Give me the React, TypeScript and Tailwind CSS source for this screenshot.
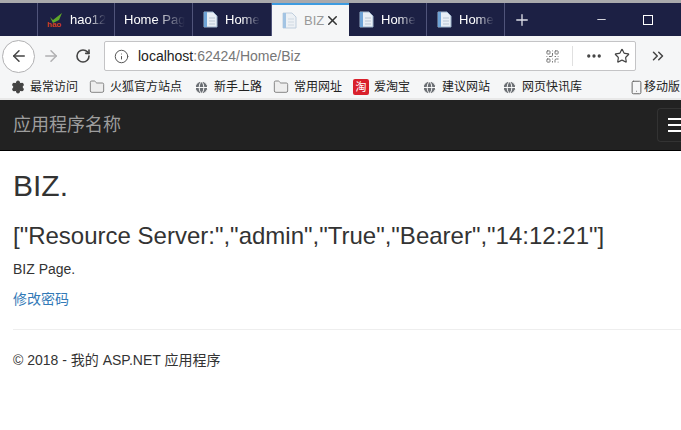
import { ArrowLeft, ArrowRight, RotateCw, Info, Ellipsis, Star, ChevronsRight, X, Plus, Minus, Settings, Folder, Globe, QrCode, Smartphone } from "lucide-react";

const cjk = "font-['Liberation_Sans','Noto_Sans_CJK_SC',sans-serif]";

function DocIcon({ dim }: { dim?: boolean }) {
  return (
    <svg width="17" height="17" viewBox="0 0 17 17" className={`shrink-0 ${dim ? "opacity-60" : ""}`}>
      <path d="M2 1h9l4 4v11H2z" fill="#e8eef5" stroke="#9db4cc" />
      <path d="M2 1h3v15H2z" fill="#6ea3d6" />
      <path d="M7 7h6M7 10h6M7 13h6" stroke="#b9c6d4" />
    </svg>
  );
}

function Tab({ label, icon, width }: { label: string; icon?: React.ReactNode; width: string }) {
  return (
    <div className={`flex h-full ${width} shrink-0 items-center gap-[6px] border-r border-[#50547a] pl-[9px] text-[13px] text-white`}>
      {icon}
      <span className="whitespace-nowrap [mask-image:linear-gradient(90deg,#000_50%,transparent)]">{label}</span>
    </div>
  );
}

function Bookmark({ icon, label, width }: { icon: React.ReactNode; label: string; width: string }) {
  return (
    <div className={`flex ${width} shrink-0 items-center gap-[5px] whitespace-nowrap`}>
      {icon}
      <span>{label}</span>
    </div>
  );
}

const folder = <Folder size={16} className="shrink-0 text-[#777] fill-[#eee]" strokeWidth={1.3} />;
const globe = <Globe size={15} className="shrink-0 text-white fill-[#6b6f74]" strokeWidth={1.5} />;

export default function App() {
  return (
    <div className={`h-[430px] w-[681px] overflow-hidden bg-white ${cjk}`}>
      <div className="h-[3px] bg-[#a9a9ac]" />
      {/* tab strip */}
      <div className="flex h-[33px] items-center bg-[#1c2044]">
        <div className="h-full w-[38px] shrink-0 border-r border-[#50547a]" />
        <Tab
          width="w-[77px]"
          label="hao12"
          icon={
            <svg width="17" height="17" viewBox="0 0 17 17" className="shrink-0">
              <path d="M3 6l3 3 9-7-3 7-6 3z" fill="#5fa829" />
              <text x="0" y="16" fontSize="8" fontWeight="700" fill="#d2401f">hao</text>
            </svg>
          }
        />
        <Tab width="w-[78px]" label="Home Pag" />
        <Tab width="w-[79px]" label="Home" icon={<DocIcon />} />
        <div className="flex h-full w-[77px] shrink-0 items-center gap-[6px] border-t-2 border-[#3d9be0] bg-[#f5f6f7] pl-[9px] text-[13px] text-[#999]">
          <DocIcon dim />
          <span>BIZ</span>
          <X size={15} className="ml-[-5px] shrink-0 text-[#333]" strokeWidth={2.4} />
        </div>
        <Tab width="w-[78px]" label="Home" icon={<DocIcon />} />
        <Tab width="w-[78px]" label="Home" icon={<DocIcon />} />
        <Plus size={18} className="ml-[8px] text-[#dcdde6]" strokeWidth={1.8} />
        <Minus size={13} className="ml-[64px] text-white" strokeWidth={1.5} />
        <div className="ml-[35px] size-[10px] border border-white" />
      </div>
      {/* toolbar */}
      <div className="flex h-[40px] items-center bg-[#f5f6f7] pl-[2px]">
        <div className="flex size-[33px] shrink-0 items-center justify-center rounded-full border border-[#b1b1b3] bg-white">
          <ArrowLeft size={18} className="text-[#444]" strokeWidth={2} />
        </div>
        <ArrowRight size={18} className="ml-[7px] shrink-0 text-[#b0b0b2]" strokeWidth={2} />
        <RotateCw size={16} className="ml-[15px] shrink-0 text-[#444]" strokeWidth={2.4} />
        <div className="ml-[13px] flex h-[30px] w-[532px] shrink-0 items-center rounded-[2px] border border-[#c4c4c6] bg-white pl-[9px] pr-[5px]">
          <Info size={15} className="shrink-0 text-[#555]" strokeWidth={1.6} />
          <span className="ml-[9px] text-[14px] text-[#222]">
            localhost<span className="text-[#777]">:62424/Home/Biz</span>
          </span>
          <QrCode size={15} className="ml-auto shrink-0 text-[#777]" strokeWidth={1.6} />
          <div className="ml-[12px] h-[20px] w-px shrink-0 bg-[#e0e0e0]" />
          <Ellipsis size={18} className="ml-[12px] shrink-0 text-[#444]" strokeWidth={2.4} />
          <Star size={16} className="ml-[11px] shrink-0 text-[#444]" strokeWidth={1.8} />
        </div>
        <ChevronsRight size={18} className="ml-[13px] shrink-0 text-[#444]" strokeWidth={2} />
      </div>
      {/* bookmarks */}
      <div className="flex h-[22px] items-center overflow-hidden whitespace-nowrap bg-[#f5f6f7] pl-[11px] text-[12px] text-[#222]">
        <Bookmark width="w-[78px]" icon={<Settings size={14} className="shrink-0 text-[#444] fill-[#444]" strokeWidth={2} />} label="最常访问" />
        <Bookmark width="w-[105px]" icon={folder} label="火狐官方站点" />
        <Bookmark width="w-[79px]" icon={globe} label="新手上路" />
        <Bookmark width="w-[80px]" icon={folder} label="常用网址" />
        <Bookmark
          width="w-[69px]"
          icon={<span className="flex size-[16px] shrink-0 items-center justify-center rounded-[2px] bg-[#d9202c] text-[11px] text-white">淘</span>}
          label="爱淘宝"
        />
        <Bookmark width="w-[80px]" icon={globe} label="建议网站" />
        <Bookmark width="w-[110px]" icon={globe} label="网页快讯库" />
        <Bookmark width="w-[60px]" icon={<Smartphone size={15} className="ml-[17px] mr-[-5px] shrink-0 text-[#666]" strokeWidth={1.6} />} label="移动版" />
      </div>
      <div className="h-[2px] bg-[#e8e8e8]" />
      {/* navbar */}
      <div className="flex h-[51px] items-center justify-between border-b border-black bg-[#222] pl-[13px]">
        <span className="text-[18px] text-[#9d9d9d]">应用程序名称</span>
        <div className="flex h-[34px] w-[24px] flex-col justify-center gap-[4px] rounded-l-[4px] border border-r-0 border-[#333] pl-[10px]">
          <span className="h-[2px] w-[14px] bg-white" />
          <span className="h-[2px] w-[14px] bg-white" />
          <span className="h-[2px] w-[14px] bg-white" />
        </div>
      </div>
      {/* content */}
      <div className="px-[13px] text-[14px] text-[#333]">
        <h1 className="mt-[18px] text-[30px] leading-[33px]">BIZ.</h1>
        <h3 className="mt-[21px] whitespace-nowrap text-[24px] leading-[26px]">["Resource Server:","admin","True","Bearer","14:12:21"]</h3>
        <p className="mt-[10px] leading-[20px]">BIZ Page.</p>
        <p className="mt-[10px] leading-[20px] text-[#337ab7]">修改密码</p>
        <hr className="mr-[-13px] mt-[20px] border-[#eee]" />
        <p className="mt-[20px] leading-[20px]">© 2018 - 我的 ASP.NET 应用程序</p>
      </div>
    </div>
  );
}
